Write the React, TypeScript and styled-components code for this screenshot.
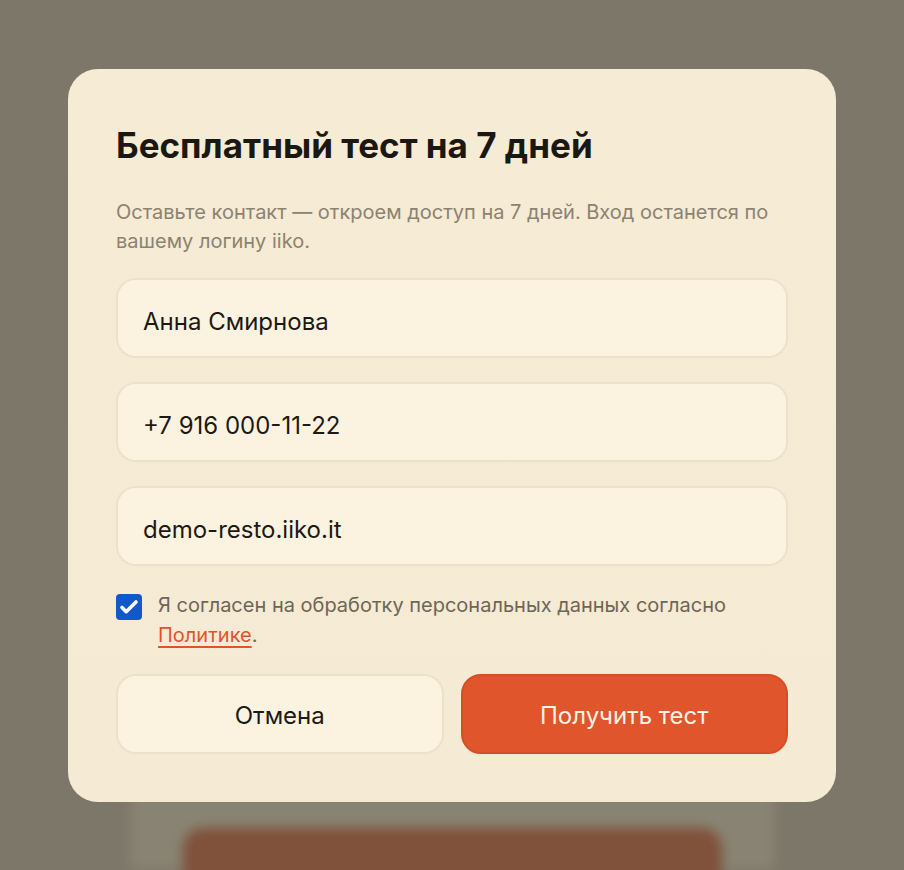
import { useState } from 'react'
import styled, { createGlobalStyle } from 'styled-components'

const GlobalStyle = createGlobalStyle`
  html, body {
    margin: 0;
    padding: 0;
    background: #7d776a;
    font-family: Inter, "Noto Sans", "Liberation Sans", sans-serif;
  }
  * {
    box-sizing: border-box;
  }
`

const Page = styled.div`
  height: 870px;
  overflow: hidden;
  background: #7d776a;
  display: flex;
  justify-content: center;
  padding-top: 420px;
`

const BlurredColumn = styled.div`
  width: 645px;
  height: 100%;
  background: #898373;
  filter: blur(6px);
  padding: 408px 53px 0;
`

const BlurredButton = styled.div`
  height: 80px;
  border-radius: 20px;
  background: #80513b;
`

const Overlay = styled.div`
  position: fixed;
  inset: 0;
  display: flex;
  align-items: center;
  justify-content: center;
`

const Dialog = styled.form`
  width: 768px;
  padding: 51px 48px 48px;
  border-radius: 30px;
  background: linear-gradient(180deg, #f6ebd4 0%, #f5ead3 100%);
  display: flex;
  flex-direction: column;
`

const Title = styled.h2`
  margin: 0;
  font-size: 35px;
  line-height: 50px;
  font-weight: 700;
  color: #1b1712;
`

const Lead = styled.p`
  margin: 28px 0 22px;
  font-size: 20px;
  line-height: 29px;
  color: #8c8272;
`

const Fields = styled.div`
  display: flex;
  flex-direction: column;
  gap: 24px;
`

const Field = styled.input`
  height: 80px;
  width: 100%;
  padding: 7px 25px 0;
  border: 2px solid #ece2cb;
  border-radius: 20px;
  background: #fbf3e0;
  font: inherit;
  font-size: 24px;
  color: #1d1914;
  outline: none;
`

const Consent = styled.label`
  margin-top: 24px;
  display: flex;
  align-items: flex-start;
  gap: 16px;
  font-size: 20px;
  line-height: 30px;
  color: #6f6557;
  cursor: pointer;
`

const Box = styled.span<{ $checked: boolean }>`
  flex: none;
  margin-top: 4px;
  width: 26px;
  height: 26px;
  border-radius: 4px;
  background: ${(p) => (p.$checked ? '#1158c9' : '#fbf3e0')};
  border: ${(p) => (p.$checked ? 'none' : '2px solid #b9ad96')};
  display: flex;
  align-items: center;
  justify-content: center;
`

const HiddenCheck = styled.input`
  display: none;
`

const PolicyLink = styled.a`
  color: #e0542a;
  text-decoration: underline;
  text-underline-offset: 4px;
  text-decoration-thickness: 1.5px;
`

const Actions = styled.div`
  margin-top: 24px;
  display: grid;
  grid-template-columns: 1fr 1fr;
  gap: 17px;
`

const ActionButton = styled.button<{ $primary?: boolean }>`
  height: 80px;
  padding-top: 4px;
  border-radius: 20px;
  font: inherit;
  font-size: 24px;
  cursor: pointer;
  border: 2px solid ${(p) => (p.$primary ? '#d44f28' : '#ece2cb')};
  background: ${(p) => (p.$primary ? '#e0552b' : '#fbf3e0')};
  color: ${(p) => (p.$primary ? '#fdf3e6' : '#1d1914')};
`

export default function App() {
  const [name, setName] = useState('Анна Смирнова')
  const [phone, setPhone] = useState('+7 916 000-11-22')
  const [domain, setDomain] = useState('demo-resto.iiko.it')
  const [agreed, setAgreed] = useState(true)

  const onSubmit = (e: React.FormEvent<HTMLFormElement>) => {
    e.preventDefault()
  }

  return (
    <>
      <GlobalStyle />
      <Page>
        <BlurredColumn>
          <BlurredButton />
        </BlurredColumn>
      </Page>
      <Overlay>
        <Dialog onSubmit={onSubmit}>
          <Title>Бесплатный тест на 7 дней</Title>
          <Lead>
            Оставьте контакт — откроем доступ на 7 дней. Вход останется по вашему логину iiko.
          </Lead>
          <Fields>
            <Field value={name} onChange={(e) => setName(e.target.value)} />
            <Field value={phone} onChange={(e) => setPhone(e.target.value)} />
            <Field value={domain} onChange={(e) => setDomain(e.target.value)} />
          </Fields>
          <Consent>
            <HiddenCheck
              type='checkbox'
              checked={agreed}
              onChange={(e) => setAgreed(e.target.checked)}
            />
            <Box $checked={agreed}>
              {agreed && (
                <svg width='22' height='22' viewBox='0 0 22 22' fill='none'>
                  <path
                    d='M4 11.5l4.2 4.2L18 6'
                    stroke='#fff'
                    strokeWidth='3.6'
                    strokeLinecap='round'
                    strokeLinejoin='round'
                  />
                </svg>
              )}
            </Box>
            <span>
              Я согласен на обработку персональных данных согласно{' '}
              <PolicyLink href='#'>Политике</PolicyLink>.
            </span>
          </Consent>
          <Actions>
            <ActionButton type='button'>Отмена</ActionButton>
            <ActionButton type='submit' $primary>
              Получить тест
            </ActionButton>
          </Actions>
        </Dialog>
      </Overlay>
    </>
  )
}
